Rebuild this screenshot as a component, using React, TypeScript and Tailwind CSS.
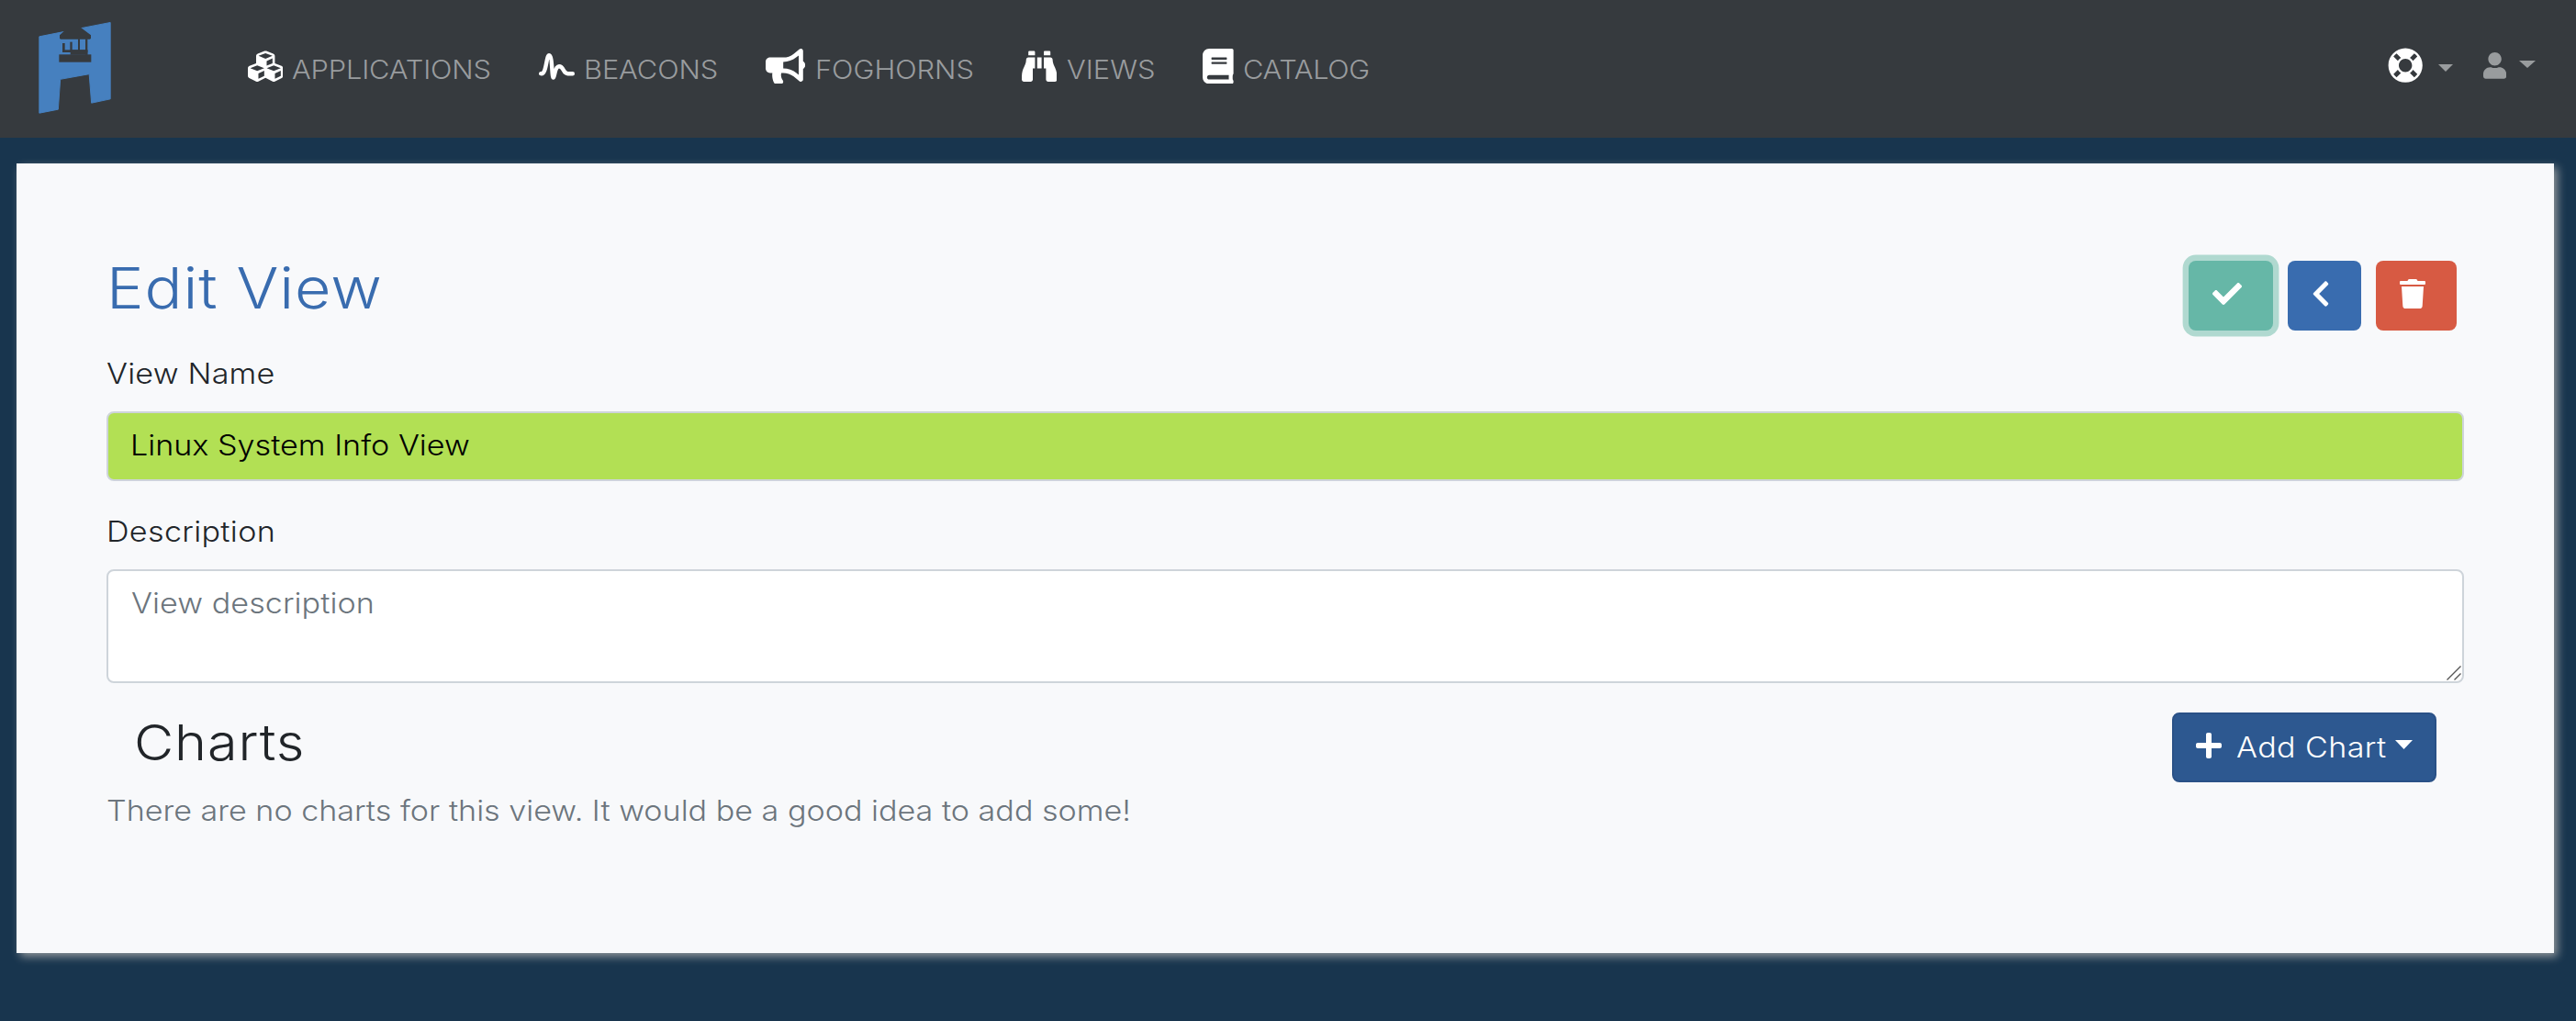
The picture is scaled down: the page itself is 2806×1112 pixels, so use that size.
import type { ReactNode } from "react";
import {
  FaBinoculars,
  FaBook,
  FaBullhorn,
  FaCheck,
  FaChevronLeft,
  FaCubes,
  FaLifeRing,
  FaPlus,
  FaTrash,
  FaUser,
} from "react-icons/fa";

function Logo() {
  return (
    <svg viewBox="0 0 330 348" className="mt-4 ml-[30px] h-[116px] w-[110px] shrink-0">
      <path
        fill="#4680bf"
        stroke="#4680bf"
        strokeWidth="3"
        strokeLinejoin="round"
        d="M38.5 71.5 122 55l25-6 28-5 95.500-18.500V275.500L209 288.500 201.500 194 107 211 100 309.500 38.500 321.500Z"
      />
      <g fill="#363a3e">
        <path d="M123 50 105 67V77L108 80H204L207 77V67L174 42V30H123Z" />
        <rect x="103" y="130" width="105" height="25" />
        <rect x="114" y="93" width="8" height="30" />
        <rect x="114" y="115" width="82" height="8" />
        <rect x="139" y="89" width="7" height="28" />
        <rect x="165" y="79" width="6" height="38" />
        <rect x="189" y="79" width="7" height="52" />
        <rect x="140" y="115" width="56" height="16" />
      </g>
    </svg>
  );
}

function PulseIcon() {
  return (
    <svg viewBox="0 0 39 39" className="h-[39px] w-[39px]" fill="none">
      <path
        d="M2.200 27.200C8.500 28.500 7.800 7.300 11.200 7.300C14.800 7.300 14 31.500 15.700 31.500C17.400 31.500 17 19.300 22 19.300C27.500 19.300 26 27.200 31.500 27.200H36.800"
        stroke="white"
        strokeWidth="4.400"
        strokeLinecap="round"
        strokeLinejoin="round"
      />
    </svg>
  );
}

function Caret({ className }: { className: string }) {
  return (
    <svg viewBox="0 0 18 9" preserveAspectRatio="none" className={className} fill="currentColor">
      <path d="M0 0H18L9 9Z" />
    </svg>
  );
}

const navItems: { label: string; icon: ReactNode; item: string; slot: string; text: string }[] = [
  { label: "APPLICATIONS", icon: <FaCubes />, item: "w-[317px]", slot: "w-12", text: "tracking-[-0.150px]" },
  { label: "BEACONS", icon: <PulseIcon />, item: "w-[247px]", slot: "w-[49.300px]", text: "tracking-[-0.100px]" },
  {
    label: "FOGHORNS",
    icon: <FaBullhorn className="h-[38.400px] w-[43.200px]" />,
    item: "w-[279px]",
    slot: "w-[54.400px]",
    text: "tracking-normal",
  },
  { label: "VIEWS", icon: <FaBinoculars />, item: "w-[197px]", slot: "w-[48.700px]", text: "tracking-normal" },
  {
    label: "CATALOG",
    icon: <FaBook className="h-[38.400px] w-[33.600px]" />,
    item: "w-[190px]",
    slot: "w-[43.500px]",
    text: "tracking-[-0.350px]",
  },
];

export default function App() {
  return (
    <div className="flex h-[1112px] w-full flex-col overflow-hidden bg-[#18354e] font-['Inter',sans-serif] text-[31px] leading-[48px] font-light text-[#212529]">
      <header className="flex h-[150px] shrink-0 items-start bg-[#363a3e] text-[#999c9e]">
        <Logo />
        <nav className="ml-[130px] flex">
          {navItems.map((n) => (
            <a key={n.label} className={`flex items-start whitespace-nowrap ${n.item}`}>
              <span className={`flex h-36 shrink-0 items-center text-[38.400px] text-white ${n.slot}`}>{n.icon}</span>
              <span className={`origin-left scale-x-110 text-[28px] leading-[152px] ${n.text}`}>{n.label}</span>
            </a>
          ))}
        </nav>
        <div className="mr-11 ml-auto flex items-start">
          <span className="flex h-[143px] items-center text-[38.400px] text-white">
            <FaLifeRing />
          </span>
          <Caret className="mt-[70px] ml-[17px] h-2 w-4" />
          <span className="ml-[33px] flex h-[143px] items-center">
            <FaUser className="h-[28.800px] w-[25.200px]" />
          </span>
          <Caret className="mt-[66px] ml-[13.800px] h-2 w-[18px]" />
        </div>
      </header>

      <main className="mt-7 mr-6 ml-[18px] h-[860px] shrink-0 bg-[#f8f9fb] px-[98px] pt-[106px] shadow-[4px_4px_9px_#8d9499]">
        <div className="flex h-[76px] items-start">
          <h1 className="origin-left scale-x-110 text-[62px] leading-[59px] tracking-[0.800px] text-[#396caf]">Edit View</h1>
          <div className="mr-2 ml-auto flex gap-4 text-[32px] text-white">
            <button className="flex h-[76px] w-[92px] items-start rounded-lg bg-[#66b7a7] pt-5 pl-[26px] shadow-[0_0_0_6.400px_#b0d9d0]">
              <FaCheck />
            </button>
            <button className="flex h-[76px] w-20 items-start rounded-lg bg-[#396caf] pt-5 pl-[26px]">
              <FaChevronLeft className="h-8 w-5" />
            </button>
            <button className="flex h-[76px] w-[88px] items-start rounded-lg bg-[#d75a43] pt-5 pl-[26px]">
              <FaTrash className="h-8 w-7" />
            </button>
          </div>
        </div>

        <label className="mt-[23px] block w-fit origin-left scale-x-110 tracking-[0.200px]">View Name</label>
        <div className="mt-[17px] h-[76px] rounded-lg border-2 border-[#ced4da] bg-[#b2e054] pb-[3px] pl-6">
          <input
            readOnly
            value="Linux System Info View"
            className="block h-full w-4/5 origin-left scale-x-110 bg-transparent tracking-normal text-black outline-none"
          />
        </div>

        <label className="mt-[31px] block w-fit origin-left scale-x-110 tracking-[0.300px]">Description</label>
        <div className="relative mt-[17px] h-[124px] rounded-lg border-2 border-[#ced4da] bg-white pt-[10.500px] pl-[24.500px]">
          <textarea
            readOnly
            placeholder="View description"
            className="block h-24 w-4/5 origin-left scale-x-110 resize-none bg-transparent tracking-[0.050px] outline-none placeholder:text-[#6c757d]"
          />
          <svg viewBox="0 0 16 16" className="absolute right-px bottom-px size-4" stroke="#555" strokeWidth="1.400">
            <path d="M0.500 15.500 15.500 0.500M8.500 15.500 15.500 8.500" />
          </svg>
        </div>

        <div className="mt-8 flex h-[76px] items-start">
          <h2 className="ml-[30px] origin-left scale-x-110 text-[54px] leading-[65px] tracking-[0.800px]">Charts</h2>
          <button className="mr-[30px] ml-auto flex h-[76px] w-72 items-start rounded-lg border-2 border-[#2a5187] bg-[#2d5890] pl-6 text-white">
            <FaPlus className="mt-[18px] h-8 w-7" />
            <span className="ml-4 w-[173px] shrink-0 text-left leading-[71px] whitespace-nowrap">
              <span className="inline-block origin-left scale-x-110 tracking-[0.350px]">Add Chart</span>
            </span>
            <Caret className="mt-7 h-[10px] w-[19px]" />
          </button>
        </div>
        <p className="mt-[6.500px] w-fit origin-left scale-x-110 whitespace-nowrap text-[#6c757d]">
          There are no charts for this view. It would be a good idea to add some!
        </p>
      </main>
    </div>
  );
}
